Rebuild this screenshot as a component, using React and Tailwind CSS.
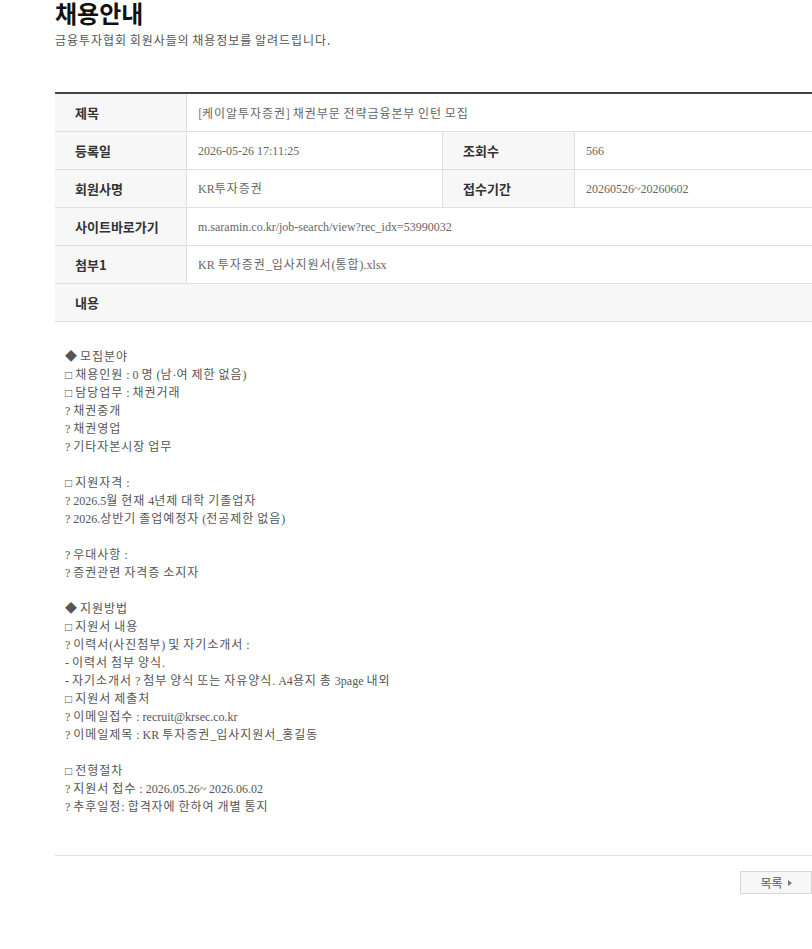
import React from "react";

const body = [
  "◆ 모집분야",
  "□ 채용인원 : 0 명 (남·여 제한 없음)",
  "□ 담당업무 : 채권거래",
  "? 채권중개",
  "? 채권영업",
  "? 기타자본시장 업무",
  "",
  "□ 지원자격 :",
  "? 2026.5월 현재 4년제 대학 기졸업자",
  "? 2026.상반기 졸업예정자 (전공제한 없음)",
  "",
  "? 우대사항 :",
  "? 증권관련 자격증 소지자",
  "",
  "◆ 지원방법",
  "□ 지원서 내용",
  "? 이력서(사진첨부) 및 자기소개서 :",
  "- 이력서 첨부 양식.",
  "- 자기소개서 ? 첨부 양식 또는 자유양식. A4용지 총 3page 내외",
  "□ 지원서 제출처",
  "? 이메일접수 : recruit@krsec.co.kr",
  "? 이메일제목 : KR 투자증권_입사지원서_홍길동",
  "",
  "□ 전형절차",
  "? 지원서 접수 : 2026.05.26~ 2026.06.02",
  "? 추후일정: 합격자에 한하여 개별 통지",
];

const serif = "font-['Liberation_Serif','Noto_Sans_CJK_KR',serif]";

// korean runs get a bit of spacing, like the original gothic font
const K = ({ t }) =>
  t.split(/([\uAC00-\uD7A3]+)/).map((s, i) =>
    i % 2 ? (
      <span key={i} className="tracking-[0.95px]">
        {s}
      </span>
    ) : (
      s
    )
  );

const Label = ({ children }) => (
  <div className="w-[132px] shrink-0 bg-[#f7f7f7] pl-[20px] flex items-center text-[13px] font-bold text-[#333] border-r border-[#e0e0e0]">
    {children}
  </div>
);

const Value = ({ text, className = "" }) => (
  <div className={`flex items-center pl-[11px] text-[12px] text-[#666] ${serif} ${className}`}>
    <span className="whitespace-pre">
      <K t={text} />
    </span>
  </div>
);

const App = () => {
  return (
    <div className="w-full overflow-hidden bg-white font-['Noto_Sans_CJK_KR','Noto_Sans',sans-serif]">
      <div className="pl-[55px] pt-[1px]">
        <h1 className="text-[24px] font-bold text-[#111] leading-[24px]">채용안내</h1>
        <p className="mt-[7px] text-[12px] text-[#555] leading-[16px]">
          <K t="금융투자협회 회원사들의 채용정보를 알려드립니다." />
        </p>

        <div className="mt-[44px] border-t-2 border-[#444]">
          <div className="flex h-[38px] border-b border-[#e0e0e0]">
            <Label>제목</Label>
            <Value className="font-['Noto_Sans_CJK_KR',sans-serif]" text="[케이알투자증권] 채권부문 전략금융본부 인턴 모집" />
          </div>
          <div className="flex h-[38px] border-b border-[#e0e0e0]">
            <Label>등록일</Label>
            <Value className="w-[256px] border-r border-[#e0e0e0]" text="2026-05-26 17:11:25" />
            <Label>조회수</Label>
            <Value text="566" />
          </div>
          <div className="flex h-[38px] border-b border-[#e0e0e0]">
            <Label>회원사명</Label>
            <Value className="w-[256px] border-r border-[#e0e0e0]" text="KR투자증권" />
            <Label>접수기간</Label>
            <Value text="20260526~20260602" />
          </div>
          <div className="flex h-[38px] border-b border-[#e0e0e0]">
            <Label>사이트바로가기</Label>
            <Value text="m.saramin.co.kr/job-search/view?rec_idx=53990032" />
          </div>
          <div className="flex h-[38px] border-b border-[#e0e0e0]">
            <Label>첨부1</Label>
            <Value text="KR 투자증권_입사지원서(통합).xlsx" />
          </div>
          <div className="flex h-[38px] border-b border-[#e0e0e0] bg-[#f7f7f7]">
            <div className="pl-[20px] flex items-center text-[13px] font-bold text-[#333]">내용</div>
          </div>
        </div>

        <div className={`pt-[26px] pb-[39px] pl-[10px] text-[12px] leading-[18px] text-[#555] ${serif} border-b border-[#e0e0e0]`}>
          {body.map((line, i) => (
            <div key={i} className="h-[18px] whitespace-pre">
              {line ? <K t={line} /> : " "}
            </div>
          ))}
        </div>

        <div className="flex justify-end pt-[15px]">
          <button className="w-[72px] h-[23px] border border-[#d6d6d6] bg-[#f7f7f7] flex items-center justify-center gap-[5px] text-[12px] text-[#555]">
            목록
            <svg width="4" height="6" viewBox="0 0 4 6" className="mt-[1px]">
              <path d="M0 0 L4 3 L0 6 Z" fill="#777" />
            </svg>
          </button>
        </div>
        <div className="h-[56px]" />
      </div>
    </div>
  );
};

export default App;
